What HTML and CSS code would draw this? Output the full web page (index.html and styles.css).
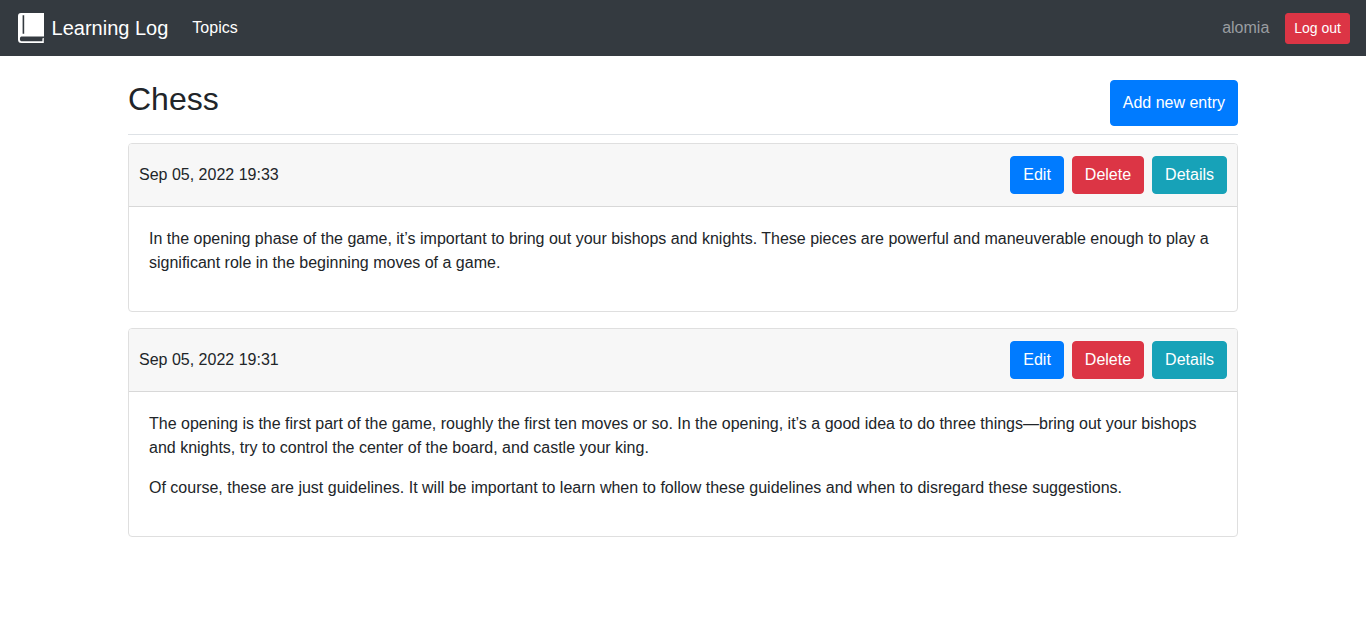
FILE: index.html
```html
<!DOCTYPE html>
<html lang="en">
<head>
<meta charset="utf-8">
<meta name="viewport" content="width=device-width, initial-scale=1">
<title>Learning Log</title>
<link rel="stylesheet" href="styles.css">
</head>
<body>
<nav class="navbar">
  <a class="brand" href="#">
    <svg class="brand-icon" viewBox="0 0 30 30" aria-hidden="true">
      <path fill="#fff" fill-rule="evenodd" d="M5 0H28V23.6H5.4C3.4 23.8 3.4 28.2 5.4 28.3H26.4V25.4L27.8 24.8V30H5.5Q2 30 2 26.5V3Q2 0 5 0ZM6.6 2.3V20.7H8.2V2.3Z"/>
    </svg>
    Learning Log
  </a>
  <a class="nav-link" href="#">Topics</a>
  <div class="account">
    <span class="username">alomia</span>
    <button class="btn btn-small btn-danger" type="button">Log out</button>
  </div>
</nav>
<main class="container">
  <header class="page-header">
    <h1 class="title">Chess</h1>
    <a class="btn btn-primary" href="#">Add new entry</a>
  </header>
  <article class="card">
    <div class="card-header">
      <time datetime="2022-09-05T19:33">Sep 05, 2022 19:33</time>
      <div class="actions">
        <a class="btn btn-primary" href="#">Edit</a>
        <a class="btn btn-danger" href="#">Delete</a>
        <a class="btn btn-info" href="#">Details</a>
      </div>
    </div>
    <div class="card-body">
      <p>In the opening phase of the game, it’s important to bring out your bishops and knights. These pieces are powerful and maneuverable enough to play a significant role in the beginning moves of a game.</p>
    </div>
  </article>
  <article class="card">
    <div class="card-header">
      <time datetime="2022-09-05T19:31">Sep 05, 2022 19:31</time>
      <div class="actions">
        <a class="btn btn-primary" href="#">Edit</a>
        <a class="btn btn-danger" href="#">Delete</a>
        <a class="btn btn-info" href="#">Details</a>
      </div>
    </div>
    <div class="card-body">
      <p>The opening is the first part of the game, roughly the first ten moves or so. In the opening, it’s a good idea to do three things—bring out your bishops and knights, try to control the center of the board, and castle your king.</p>
      <p>Of course, these are just guidelines. It will be important to learn when to follow these guidelines and when to disregard these suggestions.</p>
    </div>
  </article>
</main>
</body>
</html>
```
FILE: styles.css
```css
*, *::before, *::after {
  box-sizing: border-box;
}

body {
  margin: 0;
  background: #fff;
  color: #212529;
  font-family: "Liberation Sans", Arial, sans-serif;
  font-size: 16px;
  line-height: 24px;
}

.navbar {
  display: flex;
  align-items: center;
  min-height: 56px;
  padding: 8px 16px;
  background: #343a40;
}

.brand {
  margin-right: 16px;
  color: #fff;
  font-size: 20px;
  line-height: 30px;
  text-decoration: none;
  white-space: nowrap;
}

.brand-icon {
  width: 30px;
  height: 30px;
  vertical-align: top;
}

.nav-link {
  padding: 8px;
  color: #fff;
  text-decoration: none;
}

.account {
  display: flex;
  align-items: center;
  gap: 16px;
  margin-left: auto;
}

.username {
  color: #9a9da0;
}

.btn {
  display: inline-flex;
  align-items: center;
  justify-content: center;
  padding: 6px 12px;
  border: 1px solid transparent;
  border-radius: 4px;
  color: #fff;
  font-family: inherit;
  font-size: 16px;
  line-height: 24px;
  text-decoration: none;
  cursor: pointer;
}

.btn-small {
  padding: 4px 8px;
  border-radius: 3px;
  font-size: 14px;
  line-height: 21px;
}

.btn-primary {
  border-color: #007bff;
  background: #007bff;
}

.btn-danger {
  border-color: #dc3545;
  background: #dc3545;
}

.btn-info {
  border-color: #17a2b8;
  background: #17a2b8;
}

.container {
  max-width: 1140px;
  margin: 0 auto;
  padding: 24px 15px;
}

.page-header {
  display: flex;
  justify-content: space-between;
  margin-bottom: 8px;
  padding-bottom: 8px;
  border-bottom: 1px solid #dee2e6;
}

.title {
  margin: 0 0 8px;
  font-size: 32px;
  font-weight: 400;
  line-height: 38px;
}

.card {
  margin-bottom: 16px;
  border: 1px solid #dfdfdf;
  border-radius: 4px;
}

.card-header {
  display: flex;
  align-items: center;
  justify-content: space-between;
  padding: 12px 10px;
  border-bottom: 1px solid #d8d8d8;
  border-radius: 3px 3px 0 0;
  background: #f7f7f7;
}

.actions {
  display: flex;
  gap: 8px;
}

.card-body {
  padding: 20px;
}

.card-body p {
  margin: 0 0 16px;
}
```
